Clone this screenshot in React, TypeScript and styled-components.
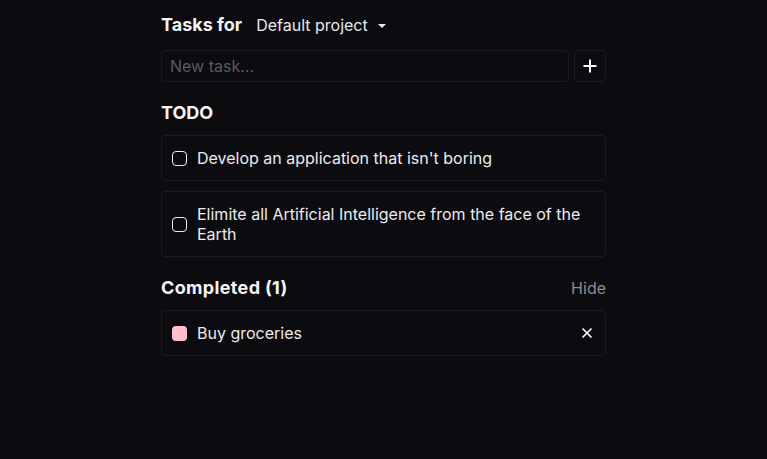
import React from "react";
import styled, { createGlobalStyle } from "styled-components";

const Global = createGlobalStyle`
  html, body { margin: 0; padding: 0; background: #0c0b10; }
  body { font-family: Inter, "Noto Sans", sans-serif; color: #f2f2f4; }
  * { box-sizing: border-box; }
`;

const Page = styled.div`
  min-height: 459px;
  background: #0c0b10;
  padding-top: 13px;
`;

const Column = styled.div`
  width: 445px;
  margin: 0 auto;
  display: flex;
  flex-direction: column;
`;

const HeaderRow = styled.div`
  display: flex;
  align-items: center;
  gap: 14px;
  height: 24px;
`;

const Title = styled.h1`
  margin: 0;
  font-size: 18px;
  font-weight: 700;
  line-height: 24px;
  color: #f4f4f6;
`;

const ProjectSelect = styled.button`
  display: flex;
  align-items: center;
  gap: 10px;
  background: none;
  border: none;
  padding: 0;
  font-family: inherit;
  font-size: 16px;
  line-height: 24px;
  color: #e8e8ea;
  cursor: pointer;
`;

const Caret = styled.span`
  width: 0;
  height: 0;
  border-left: 4px solid transparent;
  border-right: 4px solid transparent;
  border-top: 4px solid #e8e8ea;
  margin-top: 1px;
`;

const AddRow = styled.div`
  display: flex;
  gap: 5px;
  margin-top: 13px;
  height: 32px;
`;

const Input = styled.input`
  flex: 1;
  height: 32px;
  background: #0c0b10;
  border: 1px solid #1c1b22;
  border-radius: 4px;
  padding: 0 8px;
  font-family: inherit;
  font-size: 16px;
  color: #e8e8ea;
  outline: none;
  &::placeholder { color: #5b5a62; }
`;

const IconButton = styled.button`
  width: 32px;
  height: 32px;
  display: flex;
  align-items: center;
  justify-content: center;
  background: #0c0b10;
  border: 1px solid #1c1b22;
  border-radius: 4px;
  padding: 0;
  cursor: pointer;
`;

const SectionHeader = styled.div<{ $top: number }>`
  display: flex;
  align-items: center;
  justify-content: space-between;
  margin-top: ${(p) => p.$top}px;
  height: 24px;
`;

const SectionTitle = styled.h2<{ $spacing?: number }>`
  margin: 0;
  font-size: 18px;
  font-weight: 700;
  line-height: 24px;
  letter-spacing: ${(p) => p.$spacing ?? 0}px;
  color: #f4f4f6;
`;

const HideLink = styled.button`
  background: none;
  border: none;
  padding: 0;
  font-family: inherit;
  font-size: 16px;
  line-height: 24px;
  color: #8d8c93;
  cursor: pointer;
`;

const List = styled.div`
  display: flex;
  flex-direction: column;
  gap: 10px;
  margin-top: 10px;
`;

const Card = styled.div`
  display: flex;
  align-items: center;
  gap: 10px;
  padding: 12px 12px 12px 10px;
  border: 1px solid #1c1b22;
  border-radius: 4px;
  background: #0c0b10;
`;

const Check = styled.span<{ $done?: boolean }>`
  flex: none;
  width: 15px;
  height: 15px;
  border-radius: 4px;
  border: ${(p) => (p.$done ? "none" : "1.5px solid #efeff1")};
  background: ${(p) => (p.$done ? "#ffc0cb" : "transparent")};
`;

const TaskText = styled.span`
  flex: 1;
  font-size: 16px;
  line-height: 20px;
  color: #ececef;
`;

const RemoveButton = styled.button`
  flex: none;
  background: none;
  border: none;
  padding: 0;
  width: 12px;
  height: 12px;
  display: flex;
  align-items: center;
  justify-content: center;
  cursor: pointer;
`;

export default function App() {
  return (
    <>
      <Global />
      <Page>
        <Column>
          <HeaderRow>
            <Title>Tasks for</Title>
            <ProjectSelect>
              Default project
              <Caret />
            </ProjectSelect>
          </HeaderRow>
          <AddRow>
            <Input placeholder="New task..." />
            <IconButton aria-label="Add">
              <svg width="16" height="16" viewBox="0 0 16 16">
                <path d="M8 1.5v13M1.5 8h13" stroke="#ffffff" strokeWidth="2" fill="none" />
              </svg>
            </IconButton>
          </AddRow>

          <SectionHeader $top={19}>
            <SectionTitle>TODO</SectionTitle>
          </SectionHeader>
          <List>
            <Card>
              <Check />
              <TaskText>Develop an application that isn't boring</TaskText>
            </Card>
            <Card>
              <Check />
              <TaskText>Elimite all Artificial Intelligence from the face of the Earth</TaskText>
            </Card>
          </List>

          <SectionHeader $top={19}>
            <SectionTitle $spacing={0.35}>Completed (1)</SectionTitle>
            <HideLink>Hide</HideLink>
          </SectionHeader>
          <List>
            <Card>
              <Check $done />
              <TaskText>Buy groceries</TaskText>
              <RemoveButton aria-label="Remove">
                <svg width="12" height="12" viewBox="0 0 12 12">
                  <path d="M1.5 1.5l9 9M10.5 1.5l-9 9" stroke="#ffffff" strokeWidth="1.6" fill="none" />
                </svg>
              </RemoveButton>
            </Card>
          </List>
        </Column>
      </Page>
    </>
  );
}
